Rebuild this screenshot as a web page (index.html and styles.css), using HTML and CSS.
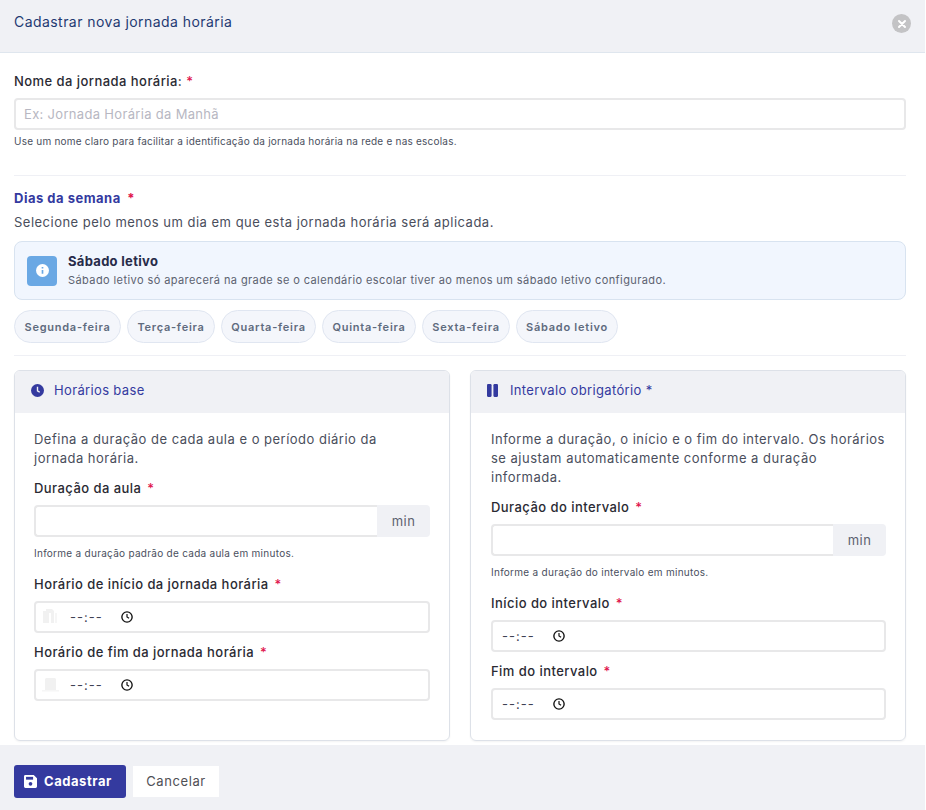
FILE: index.html
```html
<!DOCTYPE html>
<html lang="pt-BR">
<head>
    <meta charset="UTF-8">
    <title>Cadastrar nova jornada horária</title>
    <link rel="stylesheet" href="styles.css">
</head>
<body>
    <div class="modal">
        <div class="modal_header">
            <h1>Cadastrar nova jornada horária</h1>
            <i class="btn_close">
                <svg viewBox="0 0 10 10" width="10" height="10"><path d="M2 2l6 6M8 2l-6 6" stroke="#fff" stroke-width="2" stroke-linecap="round"/></svg>
            </i>
        </div>
        <div class="modal_body">
            <label class="label label_name">Nome da jornada horária: <em>*</em></label>
            <input class="input" type="text" placeholder="Ex: Jornada Horária da Manhã">
            <p class="help help_name">Use um nome claro para facilitar a identificação da jornada horária na rede e nas escolas.</p>
            <div class="line line_first"></div>

            <h2 class="days_title">Dias da semana <em>*</em></h2>
            <p class="days_text">Selecione pelo menos um dia em que esta jornada horária será aplicada.</p>
            <div class="alert">
                <div class="alert_icon">
                    <svg viewBox="0 0 14 14" width="13" height="13"><circle cx="7" cy="7" r="7" fill="#fff"/><path d="M7 3.2v1.6M7 6.4v4.2" stroke="#6aa8e4" stroke-width="1.8"/></svg>
                </div>
                <div>
                    <div class="alert_title">Sábado letivo</div>
                    <div class="alert_text">Sábado letivo só aparecerá na grade se o calendário escolar tiver ao menos um sábado letivo configurado.</div>
                </div>
            </div>
            <div class="pills">
                <span class="pill pill_seg">Segunda-feira</span>
                <span class="pill pill_ter">Terça-feira</span>
                <span class="pill pill_qua">Quarta-feira</span>
                <span class="pill pill_qui">Quinta-feira</span>
                <span class="pill pill_sex">Sexta-feira</span>
                <span class="pill pill_sab">Sábado letivo</span>
            </div>
            <div class="line line_second"></div>

            <div class="cards">
                <div class="card">
                    <div class="card_header">
                        <svg viewBox="0 0 14 14" width="13" height="13"><circle cx="7" cy="7" r="7" fill="#343a9f"/><path d="M7 3v4.3l2.4 1.6" fill="none" stroke="#f0f1f5" stroke-width="1.5"/></svg>
                        <span>Horários base</span>
                    </div>
                    <div class="card_body">
                        <p class="card_text">Defina a duração de cada aula e o período diário da jornada&nbsp;horária.</p>
                        <label class="label">Duração da aula <em>*</em></label>
                        <div class="group">
                            <input class="input" type="text">
                            <span class="addon">min</span>
                        </div>
                        <p class="help help_field">Informe a duração padrão de cada aula em minutos.</p>
                        <label class="label label_time">Horário de início da jornada horária <em>*</em></label>
                        <div class="time">
                            <svg class="ghost" viewBox="0 0 16 16" width="16" height="16"><path d="M1 15V3h3V1h6l2 2v12H9V5H7v10z" fill="#f1f1f1"/><path d="M13 5h2v10h-2z" fill="#f6f6f6"/></svg>
                            <span class="time_value">--:--</span>
                            <svg class="clock" viewBox="0 0 14 14" width="12" height="12"><circle cx="7" cy="7" r="6" fill="none" stroke="#111" stroke-width="1.6"/><path d="M7 3.4V7l2.4 1.6" fill="none" stroke="#111" stroke-width="1.4"/></svg>
                        </div>
                        <label class="label label_end">Horário de fim da jornada horária <em>*</em></label>
                        <div class="time">
                            <svg class="ghost" viewBox="0 0 17 16" width="17" height="16"><path d="M3 14V3l1-1h9l1 1v11z" fill="#f1f1f1"/><path d="M0 14h17v1.500H0z" fill="#f6f6f6"/></svg>
                            <span class="time_value">--:--</span>
                            <svg class="clock" viewBox="0 0 14 14" width="12" height="12"><circle cx="7" cy="7" r="6" fill="none" stroke="#111" stroke-width="1.6"/><path d="M7 3.4V7l2.4 1.6" fill="none" stroke="#111" stroke-width="1.4"/></svg>
                        </div>
                    </div>
                </div>
                <div class="card card_right">
                    <div class="card_header card_header_pause">
                        <svg viewBox="0 0 12 14" width="11" height="13"><rect width="5" height="14" rx="1.2" fill="#343a9f"/><rect x="7" width="5" height="14" rx="1.2" fill="#343a9f"/></svg>
                        <span>Intervalo obrigatório *</span>
                    </div>
                    <div class="card_body">
                        <p class="card_text">Informe a duração, o início e o fim do intervalo. Os horários se ajustam automaticamente conforme a duração informada.</p>
                        <label class="label">Duração do intervalo <em>*</em></label>
                        <div class="group">
                            <input class="input" type="text">
                            <span class="addon">min</span>
                        </div>
                        <p class="help help_field">Informe a duração do intervalo em minutos.</p>
                        <label class="label label_time">Início do intervalo <em>*</em></label>
                        <div class="time time_plain">
                            <span class="time_value">--:--</span>
                            <svg class="clock" viewBox="0 0 14 14" width="12" height="12"><circle cx="7" cy="7" r="6" fill="none" stroke="#111" stroke-width="1.6"/><path d="M7 3.4V7l2.4 1.6" fill="none" stroke="#111" stroke-width="1.4"/></svg>
                        </div>
                        <label class="label label_end">Fim do intervalo <em>*</em></label>
                        <div class="time time_plain">
                            <span class="time_value">--:--</span>
                            <svg class="clock" viewBox="0 0 14 14" width="12" height="12"><circle cx="7" cy="7" r="6" fill="none" stroke="#111" stroke-width="1.6"/><path d="M7 3.4V7l2.4 1.6" fill="none" stroke="#111" stroke-width="1.4"/></svg>
                        </div>
                    </div>
                </div>
            </div>
        </div>
        <div class="modal_footer">
            <button class="btn btn_save">
                <svg viewBox="0 0 14 14" width="13" height="13"><path d="M1.500 0h9L14 3.500v9a1.500 1.500 0 0 1-1.500 1.500h-11A1.500 1.500 0 0 1 0 12.500v-11A1.500 1.500 0 0 1 1.500 0z" fill="#fff"/><rect x="2.200" y="2" width="7.600" height="3" fill="#343a9f"/><circle cx="7" cy="9.500" r="2" fill="#343a9f"/></svg>
                Cadastrar
            </button>
            <button class="btn btn_cancel">Cancelar</button>
        </div>
    </div>
</body>
</html>
```

FILE: styles.css
```css
*{
    margin: 0;
    padding: 0;
    box-sizing: border-box;
}
html, body{
    height: 810px;
    overflow: hidden;
    background-color: #fff;
}
body{
    font-family: "Inter", "Liberation Sans", sans-serif;
    font-size: 13px;
    color: #3f4254;
}
em{
    font-style: normal;
    color: #e0144c;
    margin-left: 2px;
}
.modal{
    width: 925px;
    height: 810px;
    display: flex;
    flex-direction: column;
}
/* cabecalho */
.modal_header{
    height: 53px;
    flex: none;
    display: flex;
    justify-content: space-between;
    padding: 13px 14px 0;
    background-color: #f0f1f5;
    border-bottom: 1px solid #dfe6ee;
}
.modal_header h1{
    font-size: 14px;
    font-weight: 400;
    line-height: 17px;
    color: #1f3a72;
    letter-spacing: .44px;
}
.btn_close{
    width: 19px;
    height: 19px;
    margin-top: 1px;
    border-radius: 50%;
    background-color: #c3c3c5;
    display: flex;
    align-items: center;
    justify-content: center;
}
.modal_body{
    flex: 1;
    padding: 20px 19px 0 14px;
}
.label{
    display: block;
    font-size: 13px;
    font-weight: 500;
    line-height: 16px;
    color: #2a2a33;
    margin-bottom: 9px;
    letter-spacing: .45px;
}
.label_name em{
    margin-left: 0;
}
.input{
    display: block;
    width: 100%;
    height: 32px;
    padding: 0 8px;
    border: 2px solid #e8e8e9;
    border-radius: 4px;
    background-color: #fff;
    font-family: inherit;
    font-size: 13px;
    outline: none;
}
.input::placeholder{
    color: #b7b7c2;
    letter-spacing: .32px;
}
.help{
    font-size: 10px;
    line-height: 12px;
    color: #4a4f5e;
    letter-spacing: .22px;
}
.help_name{
    margin-top: 5px;
}
.help_field{
    margin-top: 10px;
    letter-spacing: .28px;
}
.line{
    height: 1px;
    background-color: #eff0f5;
}
.line_first{
    margin-top: 28px;
}
.days_title{
    font-size: 13px;
    font-weight: 700;
    line-height: 16px;
    color: #343a9f;
    margin-top: 14px;
    letter-spacing: .5px;
}
.days_title em{
    margin-left: 3px;
}
.days_text{
    line-height: 18px;
    margin-top: 7px;
    color: #4a4e5c;
    letter-spacing: .49px;
}
/* aviso */
.alert{
    height: 59px;
    margin-top: 10px;
    display: flex;
    align-items: center;
    gap: 11px;
    padding: 0 12px;
    background-color: #f1f6fe;
    border: 1px solid #d8e3f0;
    border-radius: 8px;
}
.alert_icon{
    width: 30px;
    height: 30px;
    flex: none;
    border-radius: 4px;
    background-color: #6aa8e4;
    display: flex;
    align-items: center;
    justify-content: center;
}
.alert_title{
    font-size: 13px;
    font-weight: 700;
    line-height: 16px;
    color: #272b4a;
    letter-spacing: .3px;
}
.alert_text{
    font-size: 11px;
    line-height: 15px;
    margin-top: 4px;
    color: #5c6270;
    letter-spacing: .41px;
}
/* dias */
.pills{
    display: flex;
    gap: 6px;
    margin-top: 10px;
}
.pill{
    height: 33px;
    display: flex;
    align-items: center;
    justify-content: center;
    border: 1px solid #e0e6f1;
    border-radius: 17px;
    background-color: #f4f6fb;
    font-size: 11px;
    font-weight: 600;
    color: #5f6b7e;
    letter-spacing: .75px;
}
.pill_seg{ width: 107px; }
.pill_ter{ width: 88px; }
.pill_qua{ width: 95px; }
.pill_qui{ width: 94px; }
.pill_sex{ width: 88px; }
.pill_sab{ width: 102px; }
.line_second{
    margin-top: 12px;
}
/* cartoes */
.cards{
    display: grid;
    grid-template-columns: 1fr 1fr;
    gap: 20px;
    margin-top: 14px;
}
.card{
    height: 371px;
    border: 1px solid #dde1e8;
    border-radius: 6px;
    overflow: hidden;
    box-shadow: 0 1px 2px rgba(0, 0, 0, .05);
}
.card_header{
    height: 42px;
    display: flex;
    align-items: center;
    gap: 10px;
    padding: 0 0 4px 16px;
    background-color: #f0f1f5;
    font-size: 13px;
    color: #343a9f;
    letter-spacing: .35px;
}
.card_header_pause{
    gap: 12px;
}
.card_body{
    padding: 17px 19px 0;
}
.card_right .card_body{
    padding: 17px 19px 0 20px;
}
.card_text{
    line-height: 19px;
    color: #4a4e5c;
    margin-bottom: 12px;
    letter-spacing: .49px;
}
.group{
    display: flex;
    height: 32px;
}
.group .input{
    flex: 1;
    min-width: 0;
    border-radius: 4px 0 0 4px;
    border-right: 0;
}
.addon{
    width: 53px;
    flex: none;
    display: flex;
    align-items: center;
    justify-content: center;
    background-color: #f0f1f5;
    border-radius: 0 4px 4px 0;
    color: #5c6270;
    letter-spacing: .5px;
}
.label_time{
    margin-top: 17px;
}
.label_end{
    margin-top: 11px;
}
.time{
    position: relative;
    height: 32px;
    display: flex;
    align-items: center;
    padding-left: 34px;
    border: 2px solid #e8e8e9;
    border-radius: 4px;
    font-size: 13px;
    color: #3f4254;
}
.time_plain{
    padding-left: 9px;
}
.time_value{
    width: 51px;
    letter-spacing: 1px;
}
.ghost{
    position: absolute;
    left: 6px;
    top: 5px;
}
/* rodape */
.modal_footer{
    height: 65px;
    flex: none;
    display: flex;
    align-items: center;
    gap: 7px;
    padding: 7px 14px 0;
    background-color: #f0f1f5;
}
.btn{
    border: 0;
    font-family: inherit;
    font-size: 13px;
    display: flex;
    align-items: center;
    justify-content: center;
}
.btn_save{
    width: 112px;
    height: 33px;
    gap: 7px;
    justify-content: flex-start;
    padding-left: 10px;
    border-radius: 3px;
    background-color: #343a9f;
    color: #fff;
    font-weight: 700;
    letter-spacing: .55px;
}
.btn_cancel{
    width: 86px;
    height: 31px;
    background-color: #fff;
    color: #4f4f55;
    letter-spacing: .6px;
}
```
